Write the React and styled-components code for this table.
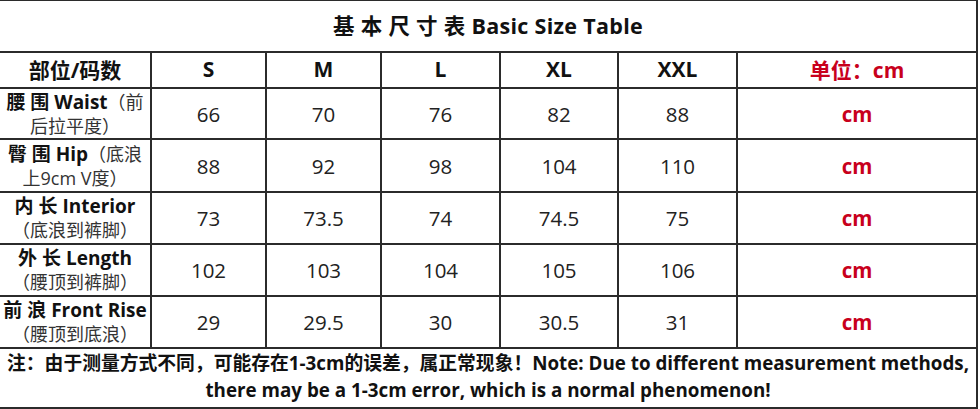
import React from "react";
import styled, { createGlobalStyle } from "styled-components";

const GlobalStyle = createGlobalStyle`
  html, body {
    margin: 0;
    padding: 0;
    background: #ffffff;
    overflow: hidden;
  }
  body {
    font-family: "Open Sans", "Noto Sans CJK SC", sans-serif;
    color: #111;
  }
`;

const Sheet = styled.table`
  border-collapse: collapse;
  table-layout: fixed;
  width: 978px;
  margin-left: -2px;
  margin-top: -1px;
  background: #fff;
`;

const Row = styled.tr`
  height: ${(p) => p.$h}px;
`;

const TitleCell = styled.th`
  border: 2px solid #2b2b2b;
  font-size: 21.5px;
  font-weight: 700;
  text-align: center;
  padding: 0 0 4px;
  letter-spacing: 0.3px;
  color: #111;
`;

const HeadCell = styled.th`
  border: 2px solid #2b2b2b;
  font-size: 21px;
  font-weight: 700;
  text-align: center;
  padding: 0 0 2px;
  color: ${(p) => (p.$red ? "#c8001c" : "#111")};
`;

const LabelCell = styled.td`
  border: 2px solid #2b2b2b;
  padding: 0;
  text-align: center;
  white-space: nowrap;
  overflow: hidden;
`;

const LabelLine = styled.div`
  height: 24px;
  line-height: 24px;
`;

const LabelMain = styled.span`
  font-size: 19px;
  font-weight: 700;
  color: #111;
`;

const LabelNote = styled.span`
  font-size: 18px;
  font-weight: 400;
  color: #333;
`;

const ValueCell = styled.td`
  border: 2px solid #2b2b2b;
  text-align: center;
  padding: 0;
  font-size: 20.5px;
  font-weight: 400;
  color: #222;
`;

const UnitCell = styled(ValueCell)`
  font-weight: 700;
  color: #c8001c;
`;

const NoteCell = styled.td`
  border: 2px solid #2b2b2b;
  text-align: center;
  padding: 0 0 2px;
  font-size: 18.8px;
  font-weight: 700;
  line-height: 27px;
  color: #111;
  white-space: nowrap;
`;

const widths = [152, 115, 115, 119, 118, 119, 240];
const sizes = ["S", "M", "L", "XL", "XXL"];

const rows = [
  { main: "腰 围 Waist", tail: "（前", second: "后拉平度）", h: 51, values: ["66", "70", "76", "82", "88"] },
  { main: "臀 围 Hip", tail: "（底浪", second: "上9cm V度）", h: 53, values: ["88", "92", "98", "104", "110"] },
  { main: "内 长 Interior", tail: "", second: "（底浪到裤脚）", h: 52, values: ["73", "73.5", "74", "74.5", "75"] },
  { main: "外 长 Length", tail: "", second: "（腰顶到裤脚）", h: 52, values: ["102", "103", "104", "105", "106"] },
  { main: "前 浪 Front Rise", tail: "", second: "（腰顶到底浪）", h: 52, values: ["29", "29.5", "30", "30.5", "31"] },
];

export default function App() {
  return (
    <>
      <GlobalStyle />
      <Sheet>
        <colgroup>
          {widths.map((w, i) => (
            <col key={i} style={{ width: w }} />
          ))}
        </colgroup>
        <thead>
          <Row $h={52}>
            <TitleCell colSpan={7}>基 本 尺 寸 表 Basic Size Table</TitleCell>
          </Row>
          <Row $h={36}>
            <HeadCell>部位/码数</HeadCell>
            {sizes.map((s) => (
              <HeadCell key={s}>{s}</HeadCell>
            ))}
            <HeadCell $red>单位：cm</HeadCell>
          </Row>
        </thead>
        <tbody>
          {rows.map((r) => (
            <Row key={r.main} $h={r.h}>
              <LabelCell>
                <LabelLine>
                  <LabelMain>{r.main}</LabelMain>
                  {r.tail && <LabelNote>{r.tail}</LabelNote>}
                </LabelLine>
                <LabelLine>
                  <LabelNote>{r.second}</LabelNote>
                </LabelLine>
              </LabelCell>
              {r.values.map((v, i) => (
                <ValueCell key={i}>{v}</ValueCell>
              ))}
              <UnitCell>cm</UnitCell>
            </Row>
          ))}
          <Row $h={60}>
            <NoteCell colSpan={7}>
              注：由于测量方式不同，可能存在1-3cm的误差，属正常现象！Note: Due to different measurement methods,
              <br />
              there may be a 1-3cm error, which is a normal phenomenon!
            </NoteCell>
          </Row>
        </tbody>
      </Sheet>
    </>
  );
}
